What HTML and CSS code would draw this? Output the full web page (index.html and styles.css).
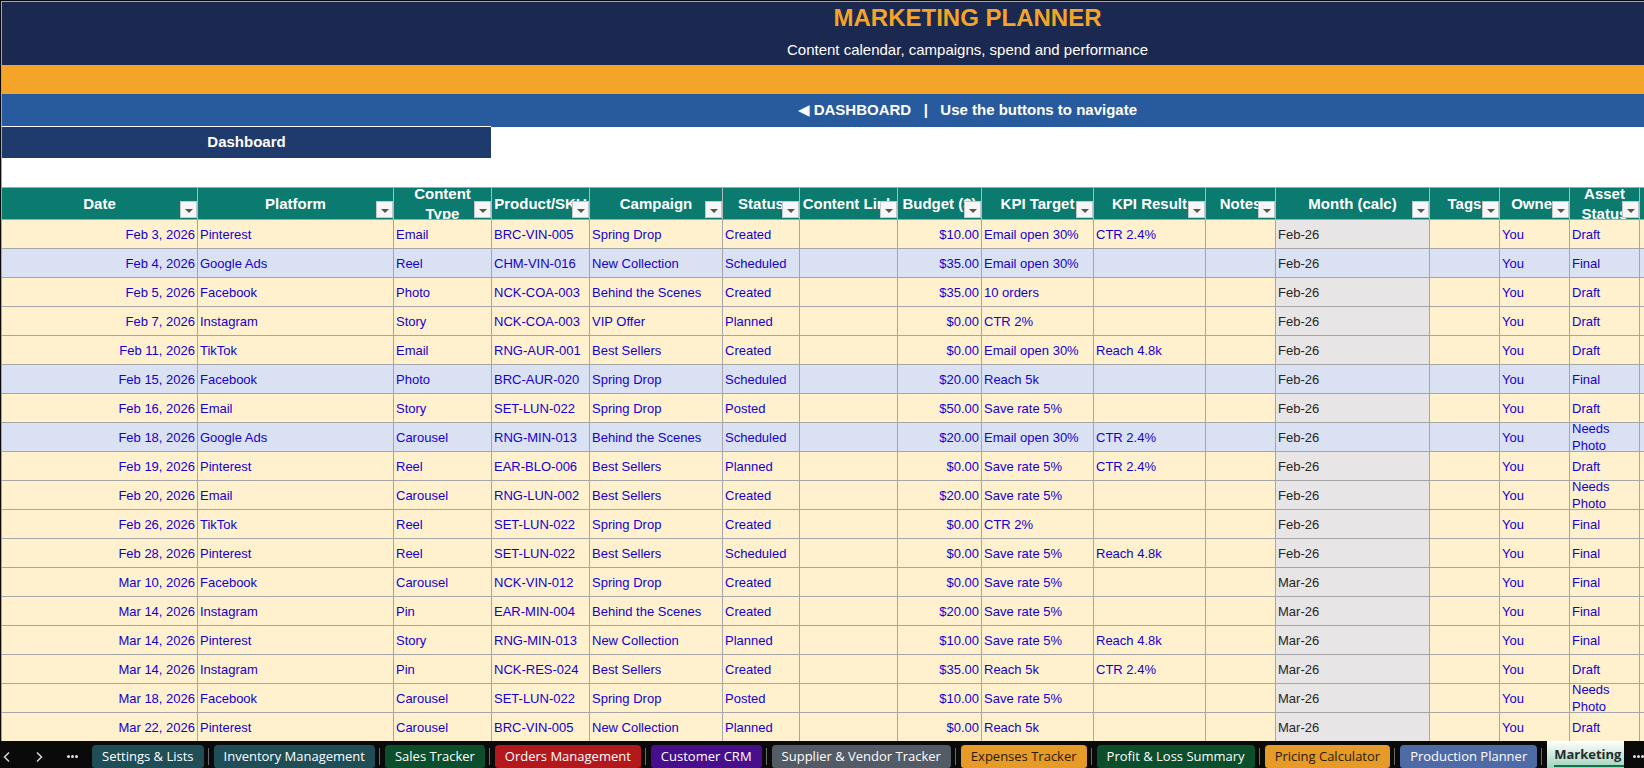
FILE: index.html
```html
<!DOCTYPE html>
<html lang="en">

<head>
  <meta charset="UTF-8">
  <title>Marketing Planner</title>
  <link rel="stylesheet" href="styles.css">
</head>

<body>
  <main class="viewport">
    <div class="sheet">
      <header class="banner">
        <h1>MARKETING PLANNER</h1>
        <p>Content calendar, campaigns, spend and performance</p>
      </header>
      <div class="accent"></div>
      <nav class="nav-row"><a href="#"><span class="arrow">◀</span> DASHBOARD   |   Use the buttons to navigate</a></nav>
      <div class="actions">
        <button type="button" class="dashboard-btn">Dashboard</button>
      </div>

      <table class="planner">
        <colgroup>
          <col class="w-xl"><col class="w-xl"><col class="w-m"><col class="w-m">
          <col class="w-campaign"><col class="w-status"><col class="w-m"><col class="w-budget">
          <col class="w-kpi"><col class="w-kpi"><col class="w-s"><col class="w-month">
          <col class="w-s"><col class="w-s"><col class="w-s"><col>
        </colgroup>
        <thead>
          <tr>
            <th><div>Date</div><button type="button" class="filter" aria-label="Filter date"></button></th>
            <th><div>Platform</div><button type="button" class="filter" aria-label="Filter platform"></button></th>
            <th><div>Content Type</div><button type="button" class="filter" aria-label="Filter content type"></button></th>
            <th><div>Product/SKU</div><button type="button" class="filter" aria-label="Filter product"></button></th>
            <th><div>Campaign</div><button type="button" class="filter" aria-label="Filter campaign"></button></th>
            <th><div>Status</div><button type="button" class="filter" aria-label="Filter status"></button></th>
            <th><div>Content Link</div><button type="button" class="filter" aria-label="Filter content link"></button></th>
            <th><div>Budget ($)</div><button type="button" class="filter" aria-label="Filter budget"></button></th>
            <th><div>KPI Target</div><button type="button" class="filter" aria-label="Filter KPI target"></button></th>
            <th><div>KPI Result</div><button type="button" class="filter" aria-label="Filter KPI result"></button></th>
            <th><div>Notes</div><button type="button" class="filter" aria-label="Filter notes"></button></th>
            <th><div>Month (calc)</div><button type="button" class="filter" aria-label="Filter month"></button></th>
            <th><div>Tags</div><button type="button" class="filter" aria-label="Filter tags"></button></th>
            <th><div>Owner</div><button type="button" class="filter" aria-label="Filter owner"></button></th>
            <th><div>Asset Status</div><button type="button" class="filter" aria-label="Filter asset status"></button></th>
            <th></th>
          </tr>
        </thead>
        <tbody id="planner-rows"></tbody>
      </table>
    </div>
  </main>

  <footer class="tabbar">
    <div class="tab-nav">
      <button type="button" aria-label="Previous sheet"><svg width="8" height="12" viewBox="0 0 8 12"><path d="M6 1.500 1.500 6 6 10.500"/></svg></button>
      <button type="button" aria-label="Next sheet"><svg width="8" height="12" viewBox="0 0 8 12"><path d="M2 1.500 6.500 6 2 10.500"/></svg></button>
      <button type="button" class="dots" aria-label="All sheets"><i></i><i></i><i></i></button>
    </div>
    <nav class="tabs">
      <a href="#" class="tab slate">Settings &amp; Lists</a>
      <a href="#" class="tab slate">Inventory Management</a>
      <a href="#" class="tab green">Sales Tracker</a>
      <a href="#" class="tab red">Orders Management</a>
      <a href="#" class="tab purple">Customer CRM</a>
      <a href="#" class="tab gray">Supplier &amp; Vendor Tracker</a>
      <a href="#" class="tab amber">Expenses Tracker</a>
      <a href="#" class="tab green">Profit &amp; Loss Summary</a>
      <a href="#" class="tab amber">Pricing Calculator</a>
      <a href="#" class="tab blue">Production Planner</a>
      <a href="#" class="tab active"><span>Marketing Planner</span></a>
    </nav>
    <button type="button" class="dots more" aria-label="More sheets"><i></i><i></i><i></i></button>
  </footer>

  <script src="script.js"></script>
</body>

</html>
```
FILE: styles.css
```css
* {
  margin: 0;
  padding: 0;
  box-sizing: border-box;
}
:root {
  --navy: #1b2950;
  --orange: #f4a428;
  --grid: #a6a6a8;
  --teal: #0a7b6e;
  --cream: #fff0ce;
}
body {
  display: flex;
  flex-direction: column;
  height: 100vh;
  overflow: hidden;
  background: #0a0a0a;
  font-family: "Liberation Sans", Arial, sans-serif;
}
button {
  border: none;
  cursor: pointer;
}
a {
  color: inherit;
  text-decoration: none;
}

/* sheet */
.viewport {
  flex: 1;
  min-height: 0;
  overflow: hidden;
  padding: 1px 0 0 1px;
}
.sheet {
  width: 1932px;
  background: #fff;
  border-top: 1px solid var(--grid);
  border-left: 1px solid var(--grid);
}
.banner {
  background: var(--navy);
  color: #fff;
  text-align: center;
}
.banner h1 {
  font-size: 24px;
  line-height: 32px;
  color: var(--orange);
}
.banner p {
  font-size: 15px;
  line-height: 31px;
}
.accent {
  height: 29px;
  background: var(--orange);
}
.nav-row {
  height: 32px;
  line-height: 32px;
  background: #285a9e;
  color: #fff;
  font-size: 15px;
  font-weight: bold;
  text-align: center;
  white-space: pre;
}
.arrow {
  font-family: "DejaVu Sans", sans-serif;
  font-weight: normal;
}
.actions {
  height: 61px;
  background: linear-gradient(#285a9e 1px, #fff 1px);
}
.dashboard-btn {
  display: block;
  width: 489px;
  height: 32px;
  padding-bottom: 2px;
  border-top: 1px solid #fff;
  background: #1f3a6c;
  color: #fff;
  font: bold 15px "Liberation Sans", Arial, sans-serif;
}

/* planner table */
.planner {
  width: 100%;
  table-layout: fixed;
  border-collapse: separate;
  border-spacing: 0;
  border-top: 1px solid var(--grid);
  font-size: 13px;
  line-height: 17px;
}
.w-xl { width: 196px; }
.w-m { width: 98px; }
.w-s { width: 70px; }
.w-campaign { width: 133px; }
.w-status { width: 77px; }
.w-budget { width: 84px; }
.w-kpi { width: 112px; }
.w-month { width: 154px; }
.planner th {
  position: relative;
  height: 32px;
  background: var(--teal);
  border-right: 1px solid #b4b8b8;
  border-bottom: 1px solid var(--grid);
  color: #fff;
  font-size: 15px;
  line-height: 20px;
}
.planner th div {
  display: flex;
  align-items: center;
  justify-content: center;
  height: 31px;
  padding: 0 2px;
  overflow: hidden;
}
.filter {
  position: absolute;
  right: 0;
  bottom: 1px;
  width: 17px;
  height: 17px;
  background: #f7f7fa;
  border: 1px solid #c4c8cc;
}
.filter::after {
  content: "";
  display: block;
  width: 0;
  margin: 2px auto 0;
  border: 4px solid transparent;
  border-top-color: #555;
  border-bottom: none;
}
.planner td {
  height: 29px;
  background: var(--cream);
  border-right: 1px solid var(--grid);
  border-bottom: 1px solid var(--grid);
  color: #1400d2;
  white-space: nowrap;
}
.planner td div {
  display: flex;
  align-items: center;
  height: 28px;
  padding: 0 2px;
  overflow: hidden;
}
.planner td.num div {
  justify-content: flex-end;
}
.planner td.wrap {
  white-space: normal;
}
.planner td.month {
  background: #e7e5e6;
  color: #262626;
}
.planner tr.scheduled td {
  background: #dae1f2;
}

/* sheet tabs */
.tabbar {
  display: flex;
  flex: none;
  height: 27px;
  background: #0a0a0a;
}
.tab-nav {
  display: flex;
  flex: none;
  align-items: center;
  gap: 24px;
  width: 92px;
  padding: 4px 0 0 3px;
}
.tab-nav button {
  display: flex;
  background: none;
}
.tab-nav svg {
  fill: none;
  stroke: #d8d8d8;
  stroke-width: 1.5;
}
.tabbar .dots {
  display: flex;
  align-items: center;
  gap: 1px;
  background: none;
}
.dots i {
  width: 3px;
  height: 3px;
  border-radius: 50%;
  background: #e0e0e0;
}
.tabs {
  display: flex;
  flex: 1;
  gap: 10px;
  min-width: 0;
  overflow: hidden;
  font-family: "Open Sans", "Segoe UI", sans-serif;
  font-size: 13px;
  line-height: 23px;
  white-space: nowrap;
}
.tab {
  position: relative;
  flex: none;
  margin-top: 4px;
  padding: 0 10px;
  border-radius: 4px 4px 3px 3px;
  color: #fff;
}
.tab:not(.active)::after {
  content: "";
  position: absolute;
  top: 3px;
  right: -5px;
  width: 1px;
  height: 17px;
  background: #6a6a6a;
}
.slate { background: #1f4e57; }
.green { background: #0b4f2c; }
.red { background: #b3181c; }
.purple { background: #470f8c; }
.gray { background: #535b66; }
.amber { background: #e69b28; color: #2b1a00; }
.blue { background: #4f6ba6; }
.tab.active {
  margin-top: 0;
  padding: 3px 7px 0;
  border-radius: 0;
  background: linear-gradient(#fff, #9fd3bd);
  color: #262b28;
  font-weight: bold;
  line-height: 21px;
}
.active span {
  display: block;
  border-bottom: 2px solid #12704a;
}
.tabbar .more {
  flex: none;
  width: 20px;
  padding: 4px 0 0 9px;
}
```
FILE: script.js
```js
// date, platform, type, sku, campaign, status, budget, target, result, asset status
const rows = [
  ['Feb 3, 2026', 'Pinterest', 'Email', 'BRC-VIN-005', 'Spring Drop', 'Created', 10, 'Email open 30%', 'CTR 2.4%', 'Draft'],
  ['Feb 4, 2026', 'Google Ads', 'Reel', 'CHM-VIN-016', 'New Collection', 'Scheduled', 35, 'Email open 30%', '', 'Final'],
  ['Feb 5, 2026', 'Facebook', 'Photo', 'NCK-COA-003', 'Behind the Scenes', 'Created', 35, '10 orders', '', 'Draft'],
  ['Feb 7, 2026', 'Instagram', 'Story', 'NCK-COA-003', 'VIP Offer', 'Planned', 0, 'CTR 2%', '', 'Draft'],
  ['Feb 11, 2026', 'TikTok', 'Email', 'RNG-AUR-001', 'Best Sellers', 'Created', 0, 'Email open 30%', 'Reach 4.8k', 'Draft'],
  ['Feb 15, 2026', 'Facebook', 'Photo', 'BRC-AUR-020', 'Spring Drop', 'Scheduled', 20, 'Reach 5k', '', 'Final'],
  ['Feb 16, 2026', 'Email', 'Story', 'SET-LUN-022', 'Spring Drop', 'Posted', 50, 'Save rate 5%', '', 'Draft'],
  ['Feb 18, 2026', 'Google Ads', 'Carousel', 'RNG-MIN-013', 'Behind the Scenes', 'Scheduled', 20, 'Email open 30%', 'CTR 2.4%', 'Needs Photo'],
  ['Feb 19, 2026', 'Pinterest', 'Reel', 'EAR-BLO-006', 'Best Sellers', 'Planned', 0, 'Save rate 5%', 'CTR 2.4%', 'Draft'],
  ['Feb 20, 2026', 'Email', 'Carousel', 'RNG-LUN-002', 'Best Sellers', 'Created', 20, 'Save rate 5%', '', 'Needs Photo'],
  ['Feb 26, 2026', 'TikTok', 'Reel', 'SET-LUN-022', 'Spring Drop', 'Created', 0, 'CTR 2%', '', 'Final'],
  ['Feb 28, 2026', 'Pinterest', 'Reel', 'SET-LUN-022', 'Best Sellers', 'Scheduled', 0, 'Save rate 5%', 'Reach 4.8k', 'Final'],
  ['Mar 10, 2026', 'Facebook', 'Carousel', 'NCK-VIN-012', 'Spring Drop', 'Created', 0, 'Save rate 5%', '', 'Final'],
  ['Mar 14, 2026', 'Instagram', 'Pin', 'EAR-MIN-004', 'Behind the Scenes', 'Created', 20, 'Save rate 5%', '', 'Final'],
  ['Mar 14, 2026', 'Pinterest', 'Story', 'RNG-MIN-013', 'New Collection', 'Planned', 10, 'Save rate 5%', 'Reach 4.8k', 'Final'],
  ['Mar 14, 2026', 'Instagram', 'Pin', 'NCK-RES-024', 'Best Sellers', 'Created', 35, 'Reach 5k', 'CTR 2.4%', 'Draft'],
  ['Mar 18, 2026', 'Facebook', 'Carousel', 'SET-LUN-022', 'Spring Drop', 'Posted', 10, 'Save rate 5%', '', 'Needs Photo'],
  ['Mar 22, 2026', 'Pinterest', 'Carousel', 'BRC-VIN-005', 'New Collection', 'Planned', 0, 'Reach 5k', '', 'Draft'],
];

// Dates whose whole row carries the blue fill
const highlighted = ['Feb 4, 2026', 'Feb 15, 2026', 'Feb 18, 2026'];

const cell = (text, cls = '') => `<td class="${cls}"><div>${text}</div></td>`;

document.getElementById('planner-rows').innerHTML = rows.map((row) => {
  const [date, platform, type, sku, campaign, status, budget, target, result, asset] = row;
  const month = date.slice(0, 3) + '-26';
  return `<tr class="${highlighted.includes(date) ? 'scheduled' : ''}">` +
    cell(date, 'num') + cell(platform) + cell(type) + cell(sku) + cell(campaign) +
    cell(status) + cell('') + cell('$' + budget.toFixed(2), 'num') + cell(target) +
    cell(result) + cell('') + cell(month, 'month') + cell('') + cell('You') +
    cell(asset, 'wrap') + cell('') + '</tr>';
}).join('');
```
